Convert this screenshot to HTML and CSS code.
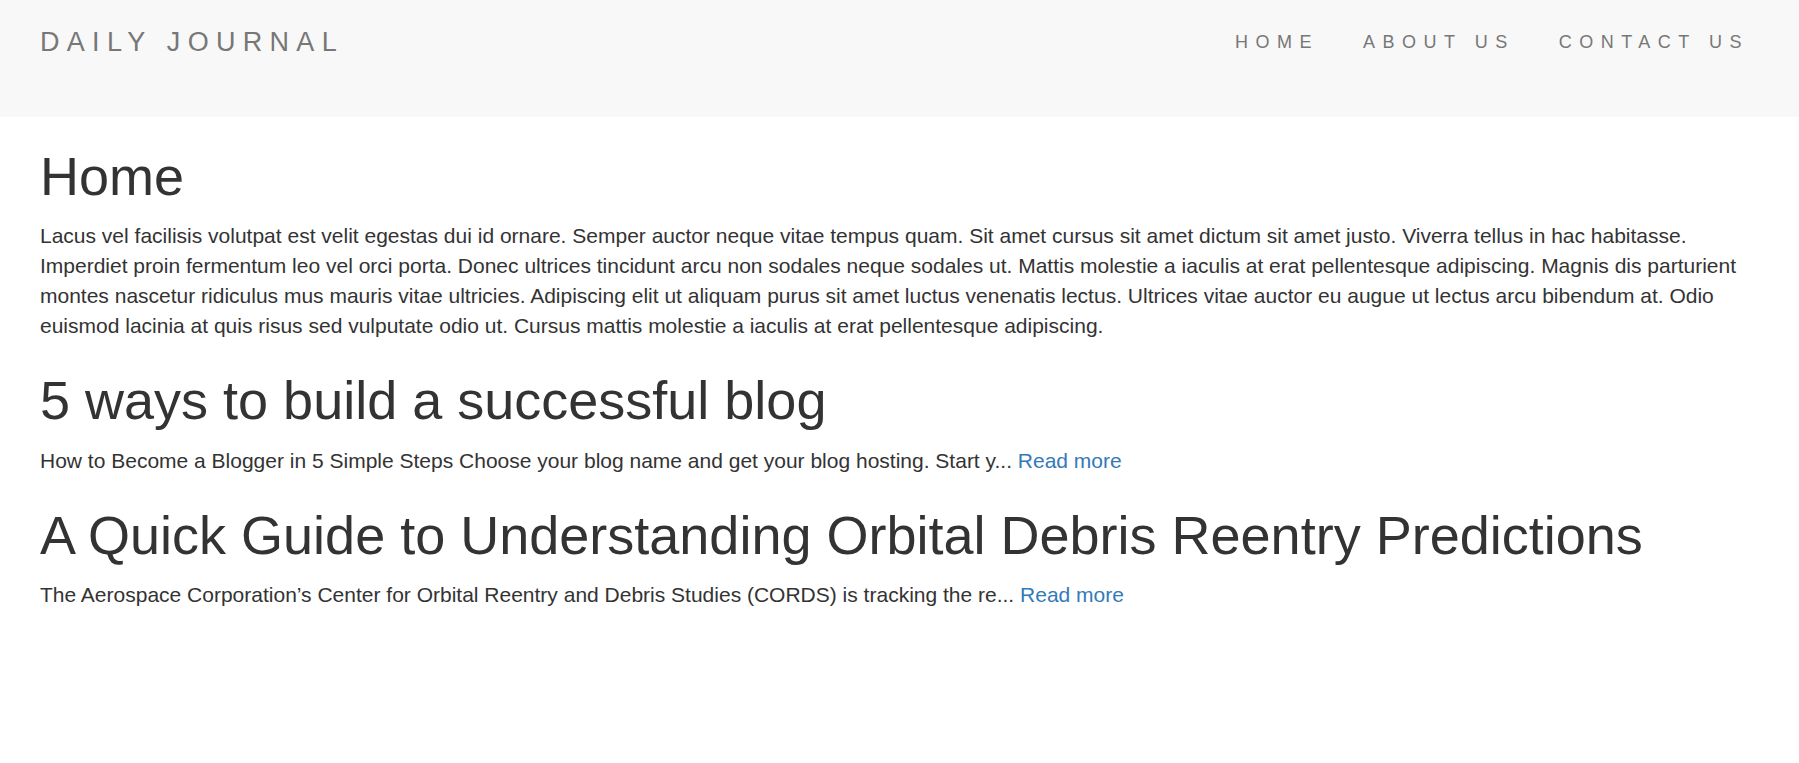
FILE: index.html
```html
<!DOCTYPE html>
<html lang="en">
<head>
<meta charset="utf-8">
<title>Daily Journal</title>
<link rel="stylesheet" href="styles.css">
</head>
<body>
<header class="site-header">
  <a class="brand" href="#">DAILY JOURNAL</a>
  <ul class="nav">
    <li><a href="#">HOME</a></li>
    <li><a href="#">ABOUT US</a></li>
    <li><a href="#">CONTACT US</a></li>
  </ul>
</header>
<main class="content">
  <h1>Home</h1>
  <p>Lacus vel facilisis volutpat est velit egestas dui id ornare. Semper auctor neque vitae tempus quam. Sit amet cursus sit amet dictum sit amet justo. Viverra tellus in hac habitasse. Imperdiet proin fermentum leo vel orci porta. Donec ultrices tincidunt arcu non sodales neque sodales ut. Mattis molestie a iaculis at erat pellentesque adipiscing. Magnis dis parturient montes nascetur ridiculus mus mauris vitae ultricies. Adipiscing elit ut aliquam purus sit amet luctus venenatis lectus. Ultrices vitae auctor eu augue ut lectus arcu bibendum at. Odio euismod lacinia at quis risus sed vulputate odio ut. Cursus mattis molestie a iaculis at erat pellentesque adipiscing.</p>

  <h1>5 ways to build a successful blog</h1>
  <p>How to Become a Blogger in 5 Simple Steps Choose your blog name and get your blog hosting. Start y... <a href="#">Read more</a></p>

  <h1>A Quick Guide to Understanding Orbital Debris Reentry Predictions</h1>
  <p>The Aerospace Corporation’s Center for Orbital Reentry and Debris Studies (CORDS) is tracking the re... <a href="#">Read more</a></p>
</main>
</body>
</html>
```

FILE: styles.css
```css
html, body {
  margin: 0;
  padding: 0;
  background: #ffffff;
}

body {
  font-family: "Liberation Sans", Arial, Helvetica, sans-serif;
  color: #333333;
}

.site-header {
  display: flex;
  justify-content: space-between;
  align-items: flex-start;
  box-sizing: border-box;
  height: 117px;
  padding: 27px 28px 0 40px;
  background: #f8f8f8;
}

.brand {
  font-size: 27px;
  line-height: 30px;
  letter-spacing: 7.3px;
  color: #777777;
  text-decoration: none;
}

.nav {
  display: flex;
  list-style: none;
  margin: 0;
  padding: 0;
}

.nav a {
  display: block;
  padding: 0 22px;
  font-size: 18px;
  line-height: 30px;
  letter-spacing: 7.5px;
  color: #777777;
  text-decoration: none;
}

.content {
  padding: 0 40px;
}

.content h1 {
  margin: 30px 0 15px;
  font-size: 54px;
  line-height: 1.1;
  font-weight: 500;
  color: #333333;
}

.content p {
  margin: 0 0 15px;
  font-size: 21px;
  line-height: 30px;
}

.content a {
  color: #337ab7;
  text-decoration: none;
}
```
